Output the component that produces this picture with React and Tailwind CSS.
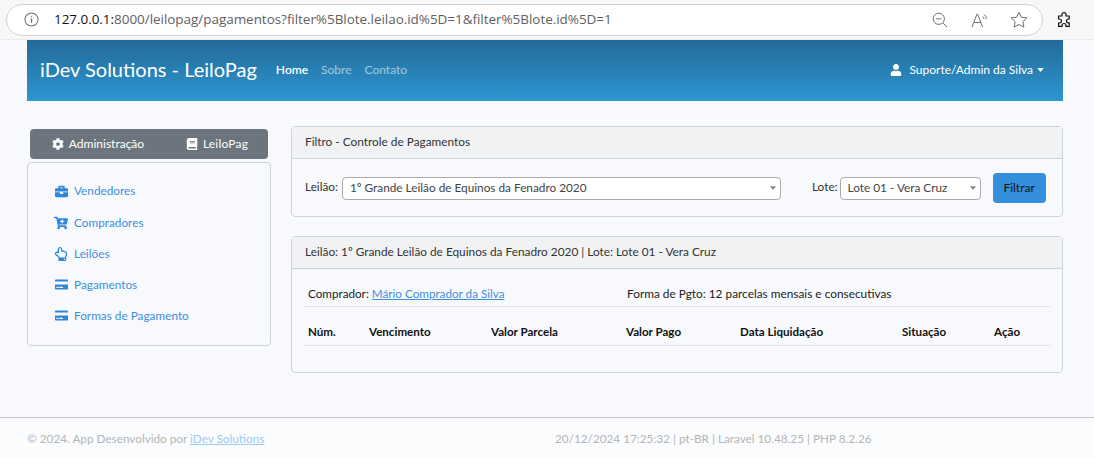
import { FaBook, FaBriefcase, FaCartPlus, FaCog, FaCreditCard, FaRegHandPointUp, FaUser } from "react-icons/fa";

const menu = [
  { label: "Vendedores", icon: FaBriefcase, className: "h-[32px]", iconClass: "text-[13px]" },
  { label: "Compradores", icon: FaCartPlus, className: "h-[31px]", iconClass: "text-[14px]" },
  { label: "Leilões", icon: FaRegHandPointUp, className: "h-[31px]", iconClass: "text-[14px]" },
  { label: "Pagamentos", icon: FaCreditCard, className: "h-[31px]", iconClass: "text-[13px]" },
  { label: "Formas de Pagamento", icon: FaCreditCard, className: "h-[31px]", iconClass: "text-[13px]" },
];

const columns = [
  { label: "Núm.", className: "w-[61px]" },
  { label: "Vencimento", className: "w-[122px]" },
  { label: "Valor Parcela", className: "w-[135px]" },
  { label: "Valor Pago", className: "w-[114px]" },
  { label: "Data Liquidação", className: "w-[162px]" },
  { label: "Situação", className: "w-[92px]" },
  { label: "Ação", className: "" },
];

const Caret = ({ className }) => (
  <svg viewBox="0 0 8 5" className={className} aria-hidden="true">
    <path d="M0 0h8L4 5z" fill="currentColor" />
  </svg>
);

const SelectBox = ({ className, value }) => (
  <div className={`relative h-[23px] ${className}`}>
    <select
      defaultValue={value}
      className="h-full w-full appearance-none rounded-[4px] border border-[#aaaaaa] bg-white pl-[7px] pr-5 text-[11.8px] text-[#444444] outline-none"
    >
      <option>{value}</option>
    </select>
    <Caret className="pointer-events-none absolute right-[5px] top-[9px] h-[4px] w-[6px] text-[#888888]" />
  </div>
);

const BrowserBar = () => (
  <div className="flex h-10 items-center border-b border-[#ebebeb] bg-[#f7f7f7] pl-[6px]">
    <div className="flex h-[32px] w-[1037px] items-center rounded-full border border-[#d2d2d2] bg-white pl-[17px] pr-[14px] font-['Open_Sans',sans-serif] text-[#5f5f5f]">
      <svg viewBox="0 0 16 16" className="h-[15px] w-[15px]" fill="none" stroke="#6f6f6f" strokeWidth="1.1">
        <circle cx="8" cy="8" r="7" />
        <path d="M8 7v4.5M8 4.4v1.3" strokeWidth="1.4" />
      </svg>
      <div className="ml-[15px] text-[13.5px] tracking-[-0.045px]">
        <span className="text-[#111111]">127.0.0.1:</span>8000/leilopag/pagamentos?filter%5Blote.leilao.id%5D=1&amp;filter%5Blote.id%5D=1
      </div>
      <div className="ml-auto flex items-center gap-[21px]">
        <svg viewBox="0 0 16 16" className="mr-[2px] h-[16px] w-[16px]" fill="none" stroke="#707070" strokeWidth="1">
          <circle cx="6.8" cy="6.8" r="5.6" />
          <path d="M4.2 6.8h5.2M11 11l4 4" />
        </svg>
        <svg viewBox="0 0 18 16" className="h-[16px] w-[18px]" fill="none" stroke="#707070" strokeWidth="1">
          <path d="M1 15 6 2h.6l5 13M3 10.5h7" />
          <path d="M11.5 4.5a3 3 0 0 1 1.5 2.6M13 2.5a5.5 5.5 0 0 1 2.5 4.6" />
        </svg>
        <svg viewBox="0 0 18 17" className="h-[17px] w-[18px]" fill="none" stroke="#707070" strokeWidth="1">
          <path d="m9 1.2 2.4 5 5.5.7-4 3.8 1 5.4L9 13.5l-4.9 2.6 1-5.4-4-3.8 5.5-.7z" />
        </svg>
      </div>
    </div>
    <svg viewBox="0 0 16 16" className="ml-[13px] h-[16px] w-[16px]" fill="none" stroke="#111111" strokeWidth="1.2">
      <path d="M6 2.6a2 2 0 0 1 4 0V4h3.2v3h-.8a1.9 1.9 0 0 0 0 3.8h.8v3.6H10v-.9a2 2 0 0 0-4 0v.9H2.6V11h.9a2 2 0 0 0 0-4h-.9V4H6z" />
    </svg>
  </div>
);

const Navbar = () => (
  <nav className="flex h-[61px] items-center bg-gradient-to-b from-[#226b98] to-[#2e96d2] pb-[3px] pl-[13px] pr-[19px]">
    <a className="text-[20px] text-white">iDev Solutions - LeiloPag</a>
    <div className="ml-[19px] flex gap-[13px] pt-[1px] text-[12px]">
      <a className="font-semibold text-white">Home</a>
      <a className="text-white/55">Sobre</a>
      <a className="text-white/55">Contato</a>
    </div>
    <div className="ml-auto flex items-center pt-[1px] text-[12px] text-white">
      <FaUser className="mr-[7px] text-[12px]" />
      Suporte/Admin da Silva
      <Caret className="ml-[4px] h-[4px] w-[7px]" />
    </div>
  </nav>
);

const Sidebar = () => (
  <aside className="w-[244px] pt-[3px]">
    <div className="mx-[3px] flex h-[30px] items-center rounded-[4px] bg-[#6c757d] text-[12px] text-white">
      <div className="flex w-[136px] items-center justify-center gap-[5px]">
        <FaCog className="text-[12px]" />
        Administração
      </div>
      <div className="flex w-[102px] items-center justify-center gap-[5px]">
        <FaBook className="text-[12px]" />
        <span className="tracking-[0.2px]">LeiloPag</span>
      </div>
    </div>
    <div className="mt-[3px] h-[184px] rounded-[4px] border border-[#cfd2d6] pl-[23px] pt-[12px]">
      {menu.map(({ label, icon: Icon, className, iconClass }) => (
        <a key={label} className={`flex items-center text-[11.8px] text-[#3d8fe0] ${className}`}>
          <span className="flex w-[20px] justify-center">
            <Icon className={`text-[#2e86d8] ${iconClass}`} />
          </span>
          <span className="ml-[3px]">{label}</span>
        </a>
      ))}
    </div>
  </aside>
);

const Card = ({ title, className, children }) => (
  <section className={`rounded-[4px] border border-[#d0d3d7] ${className}`}>
    <header className="flex h-[32px] items-center border-b border-[#d0d3d7] bg-[#f1f2f4] px-[13px] pb-[1px] text-[11.83px] text-[#333333]">
      {title}
    </header>
    {children}
  </section>
);

const App = () => (
  <div className="flex h-[458px] flex-col overflow-hidden bg-[#f8f9fc] font-['Lato',sans-serif]">
    <BrowserBar />
    <div className="px-[27px] pr-[31px]">
      <Navbar />
      <main className="mt-[25px] flex gap-[20px]">
        <Sidebar />
        <div className="flex w-[772px] flex-col gap-[19px]">
          <Card title="Filtro - Controle de Pagamentos" className="h-[91px]">
            <div className="flex items-center pl-[13px] pt-[14px] text-[11.8px] text-[#333333]">
              <label className="pb-[3px]">Leilão:</label>
              <SelectBox className="ml-[4px] w-[439px]" value="1º Grande Leilão de Equinos da Fenadro 2020" />
              <label className="ml-[31px] pb-[3px]">Lote:</label>
              <SelectBox className="ml-[2px] w-[141px]" value="Lote 01 - Vera Cruz" />
              <button className="ml-[12px] h-[30px] w-[53px] rounded-[4px] bg-[#3490dc] text-[12px] text-[#111111]">
                Filtrar
              </button>
            </div>
          </Card>
          <Card title="Leilão: 1º Grande Leilão de Equinos da Fenadro 2020 | Lote: Lote 01 - Vera Cruz" className="h-[137px]">
            <div className="mx-[12px] text-[11.85px] text-[#222222]">
              <div className="flex h-[38px] items-end border-b border-[#e2e4e7] pb-[3px] pl-[4px]">
                <div className="w-[319px] text-[11.7px]">
                  Comprador: <a className="text-[#3d8fe0] underline">Mário Comprador da Silva</a>
                </div>
                <div>Forma de Pgto: 12 parcelas mensais e consecutivas</div>
              </div>
              <table className="w-full table-fixed border-b border-[#e2e4e7]">
                <thead>
                  <tr className="h-[38px]">
                    {columns.map((col) => (
                      <th key={col.label} className={`px-[4px] pt-[14px] pb-[3px] text-left text-[11.6px] font-bold text-[#111111] ${col.className}`}>
                        {col.label}
                      </th>
                    ))}
                  </tr>
                </thead>
              </table>
            </div>
          </Card>
        </div>
      </main>
    </div>
    <footer className="mt-auto flex h-[41px] items-center border-t border-[#c4c6c9] bg-[#fbfcfe] pl-[27px] pt-[2px] text-[11.75px] text-[#b3b5b8]">
      <div className="w-[528px]">
        © 2024. App Desenvolvido por <a className="text-[#9ccbf2] underline">iDev Solutions</a>
      </div>
      <div>20/12/2024 17:25:32 | pt-BR | Laravel 10.48.25 | PHP 8.2.26</div>
    </footer>
  </div>
);

export default App;
